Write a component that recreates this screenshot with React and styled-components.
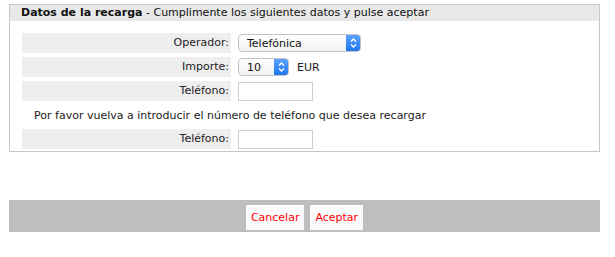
import styled, { createGlobalStyle } from "styled-components";

const GlobalStyle = createGlobalStyle`
    body {
        margin: 0;
        background: #fff;
        font-family: "DejaVu Sans", Verdana, sans-serif;
        font-size: 11px;
        color: #222;
    }
`;

const Page = styled.div`
    padding: 4px 0 0 9px;
    width: 591px;
`;

const Panel = styled.section`
    box-sizing: border-box;
    width: 591px;
    height: 148px;
    border: 1px solid #c6c6c6;
`;

const PanelTitle = styled.div`
    background: #e8e8e8;
    height: 16px;
    line-height: 16px;
    padding-left: 11px;
    color: #111;

    b {
        font-weight: 700;
    }
`;

const Form = styled.div`
    display: grid;
    grid-template-columns: 209px 203px;
    grid-auto-rows: 20px;
    column-gap: 4px;
    row-gap: 4px;
    margin: 12px 0 0 12px;
`;

const Label = styled.div`
    background: #eeeeee;
    text-align: right;
    line-height: 20px;
    padding-right: 2px;
`;

const Value = styled.div`
    display: flex;
    align-items: center;
    gap: 8px;
    padding-left: 3px;
`;

const Message = styled.div`
    grid-column: 1 / -1;
    height: 14px;
    line-height: 14px;
    align-self: center;
    text-align: center;
    margin-top: 2px;
`;

const SelectBox = styled.div`
    box-sizing: border-box;
    display: flex;
    align-items: center;
    width: ${(p) => p.$width}px;
    height: 18px;
    border: 1px solid #c3c3c3;
    border-radius: 4px;
    background: linear-gradient(#ffffff, #f2f2f2);
    overflow: hidden;
`;

const SelectText = styled.span`
    flex: 1;
    padding-left: 8px;
    color: #111;
`;

const Stepper = styled.span`
    width: 15px;
    height: 18px;
    margin: -1px -1px -1px 0;
    border-radius: 0 4px 4px 0;
    background: linear-gradient(#5ba6fb, #1c73f0);
    display: flex;
    align-items: center;
    justify-content: center;
`;

const TextInput = styled.div`
    box-sizing: border-box;
    width: 75px;
    height: 19px;
    border: 1px solid #cfcfcf;
    background: #fff;
`;

const ButtonBar = styled.div`
    margin-top: 48px;
    width: 591px;
    height: 32px;
    background: #bebebe;
    display: flex;
    justify-content: center;
    align-items: flex-start;
    gap: 6px;
    padding-top: 5px;
    box-sizing: border-box;
`;

const BarButton = styled.button`
    height: 25px;
    padding: 0 5px;
    border: none;
    background: #fbfbfb;
    color: #ff0000;
    font-family: "DejaVu Sans", Verdana, sans-serif;
    font-size: 11px;
    cursor: pointer;
`;

function Chevrons() {
    return (
        <svg width="7" height="10" viewBox="0 0 7 10">
            <path d="M1 3.5 L3.5 1 L6 3.5 M1 6.5 L3.5 9 L6 6.5" fill="none" stroke="#fff" strokeWidth="1.4" />
        </svg>
    );
}

function Select({ width, value }) {
    return (
        <SelectBox $width={width}>
            <SelectText>{value}</SelectText>
            <Stepper>
                <Chevrons />
            </Stepper>
        </SelectBox>
    );
}

export default function App() {
    return (
        <>
            <GlobalStyle />
            <Page>
                <Panel>
                    <PanelTitle>
                        <b>Datos de la recarga</b> - Cumplimente los siguientes datos y pulse aceptar
                    </PanelTitle>
                    <Form>
                        <Label>Operador:</Label>
                        <Value>
                            <Select width={123} value="Telefónica" />
                        </Value>
                        <Label>Importe:</Label>
                        <Value>
                            <Select width={51} value="10" />
                            <span>EUR</span>
                        </Value>
                        <Label>Teléfono:</Label>
                        <Value>
                            <TextInput />
                        </Value>
                        <Message>Por favor vuelva a introducir el número de teléfono que desea recargar</Message>
                        <Label>Teléfono:</Label>
                        <Value>
                            <TextInput />
                        </Value>
                    </Form>
                </Panel>
                <ButtonBar>
                    <BarButton>Cancelar</BarButton>
                    <BarButton>Aceptar</BarButton>
                </ButtonBar>
            </Page>
        </>
    );
}
